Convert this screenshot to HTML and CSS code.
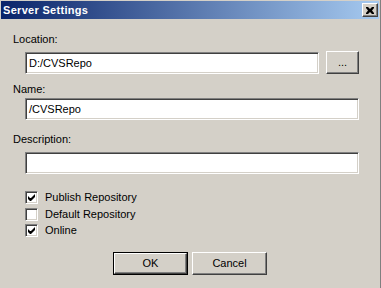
FILE: index.html
```html
<!DOCTYPE html>
<html lang="en">
<head>
    <meta charset="UTF-8">
    <title>Server Settings</title>
    <link rel="stylesheet" href="styles.css">
</head>
<body>
    <div class="window">
        <div class="title-bar">
            <span class="title">Server Settings</span>
            <span class="close-btn">
                <svg width="8" height="7" viewBox="0 0 8 7"><path d="M0 0h2l2 2 2-2h2v1l-2 2.5 2 2.5v1h-2l-2-2-2 2h-2v-1l2-2.5-2-2.5z" fill="#000"/></svg>
            </span>
        </div>

        <div class="content">
            <div class="label first">Location:</div>
            <div class="row">
                <div class="field location">D:/CVSRepo</div>
                <div class="btn browse">...</div>
            </div>

            <div class="label name">Name:</div>
            <div class="field">/CVSRepo</div>

            <div class="label desc">Description:</div>
            <div class="field"></div>

            <div class="checks">
                <div class="check-row"><span class="box checked"><svg width="7" height="7" viewBox="0 0 7 7"><path d="M0 2v3l2 2h1l4-4v-3l-4 4h-1z" fill="#000"/></svg></span>Publish Repository</div>
                <div class="check-row"><span class="box"></span>Default Repository</div>
                <div class="check-row"><span class="box checked"><svg width="7" height="7" viewBox="0 0 7 7"><path d="M0 2v3l2 2h1l4-4v-3l-4 4h-1z" fill="#000"/></svg></span>Online</div>
            </div>

            <div class="buttons">
                <div class="btn default"><span class="btn-inner">OK</span></div>
                <div class="btn wide"><span class="btn-inner">Cancel</span></div>
            </div>
        </div>
    </div>
</body>
</html>
```

FILE: styles.css
```css
body {
    margin: 0;
    padding: 0;
    background: #d4d0c8;
    font-family: 'Liberation Sans', Arial, sans-serif;
    font-size: 11px;
    color: #000;
}
.window {
    width: 381px;
    height: 288px;
    padding: 1px 1px 0 1px;
    box-sizing: border-box;
    border-right: 1px solid #808080;
}
.title-bar {
    height: 18px;
    background: linear-gradient(to right, #0a246a, #a6caf0);
    display: flex;
    align-items: center;
    justify-content: space-between;
}
.title {
    color: #fff;
    font-weight: bold;
    font-size: 11px;
    padding-left: 2px;
    letter-spacing: 0.3px;
}
.close-btn {
    width: 16px;
    height: 14px;
    margin-right: 1px;
    box-sizing: border-box;
    background: #d4d0c8;
    border-top: 1px solid #fff;
    border-left: 1px solid #fff;
    border-right: 1px solid #404040;
    border-bottom: 1px solid #404040;
    box-shadow: inset -1px -1px #808080;
    display: flex;
    align-items: center;
    justify-content: center;
}
.content {
    padding: 0 20px 0 12px;
}
.label {
    height: 13px;
    line-height: 13px;
}
.label.first {
    margin-top: 14px;
    margin-bottom: 5px;
}
.label.name {
    margin-top: 9px;
    margin-bottom: 2px;
}
.label.desc {
    margin-top: 13px;
    margin-bottom: 6px;
}
.row {
    display: flex;
    align-items: flex-start;
    gap: 7px;
}
.field {
    margin-left: 12px;
    height: 22px;
    box-sizing: border-box;
    background: #fff;
    border-top: 1px solid #808080;
    border-left: 1px solid #808080;
    border-right: 1px solid #fff;
    border-bottom: 1px solid #fff;
    box-shadow: inset 1px 1px #404040, inset -1px -1px #d4d0c8;
    padding: 0 3px;
    line-height: 20px;
}
.field.location {
    flex: 1;
    margin-top: 1px;
}
.btn {
    box-sizing: border-box;
    background: #d4d0c8;
    border-top: 1px solid #fff;
    border-left: 1px solid #fff;
    border-right: 1px solid #404040;
    border-bottom: 1px solid #404040;
    box-shadow: inset -1px -1px #808080;
    text-align: center;
}
.btn.browse {
    width: 33px;
    height: 23px;
    line-height: 21px;
}
.checks {
    margin-top: 15px;
    margin-left: 12px;
}
.check-row {
    display: flex;
    align-items: center;
    height: 16px;
    gap: 7px;
}
.check-row + .check-row {
    margin-top: 1px;
}
.check-row:last-child {
    margin-top: 0;
}
.box {
    width: 13px;
    height: 13px;
    box-sizing: border-box;
    background: #fff;
    border-top: 1px solid #808080;
    border-left: 1px solid #808080;
    border-right: 1px solid #fff;
    border-bottom: 1px solid #fff;
    box-shadow: inset 1px 1px #404040, inset -1px -1px #d4d0c8;
    display: flex;
    align-items: center;
    justify-content: center;
}
.buttons {
    display: flex;
    justify-content: center;
    gap: 4px;
    margin-top: 14px;
    padding-left: 8px;
}
.buttons .btn {
    width: 75px;
    height: 23px;
    line-height: 21px;
}
.btn.default {
    border: 1px solid #000;
    box-shadow: none;
    padding: 0;
}
.btn.default .btn-inner {
    display: block;
    height: 21px;
    line-height: 19px;
    box-sizing: border-box;
    border-top: 1px solid #fff;
    border-left: 1px solid #fff;
    border-right: 1px solid #404040;
    border-bottom: 1px solid #404040;
    box-shadow: inset -1px -1px #808080;
}
```
